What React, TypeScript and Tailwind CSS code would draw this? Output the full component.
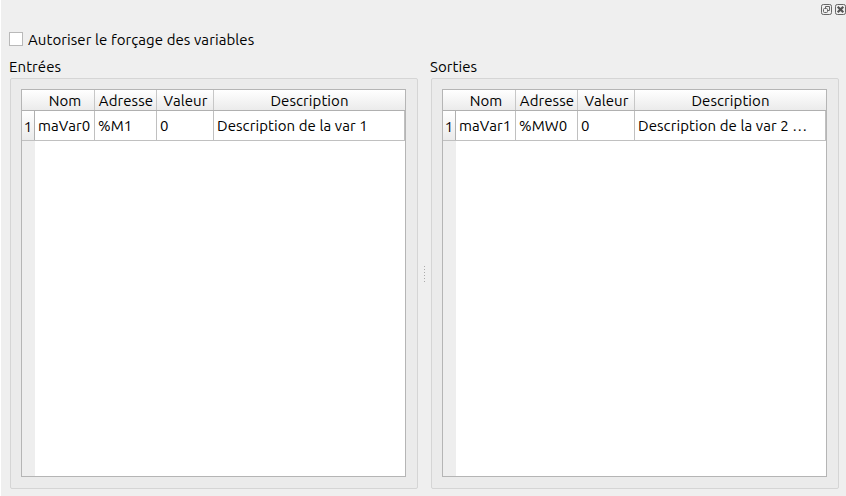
import React from "react";

type TableProps = { title: string; nom: string; adresse: string; valeur: string; description: string };

const headerCell =
  "flex h-full shrink-0 items-center justify-center border-r border-[#c7c7c7] pt-[2px] pl-px";
const bodyCell =
  "flex h-full shrink-0 items-center overflow-hidden border-r border-[#c0c0c0] pl-[3px]";

function VariableTable({ title, nom, adresse, valeur, description }: TableProps) {
  return (
    <section className="w-[409px]">
      <h2 className="h-5">{title}</h2>
      <div className="ml-px mt-px h-[411px] w-[408px] rounded-[2px] border border-[#d5d5d5] bg-[#ebebeb] p-[10px]">
        <div className="flex h-[388px] w-[385px] flex-col border border-[#b5b5b5] bg-white">
          <div className="flex h-[21px] shrink-0 border-b border-[#b0b0b0] bg-linear-to-b from-white to-[#ebebeb] pl-[13px]">
            <div className={`${headerCell} w-[60px]`}>Nom</div>
            <div className={`${headerCell} w-[62px]`}>Adresse</div>
            <div className={`${headerCell} w-[57px]`}>Valeur</div>
            <div className="flex flex-1 items-center justify-center pt-[2px]">Description</div>
          </div>
          <div className="flex h-[30px] shrink-0 border-b border-[#c0c0c0]">
            <div className="flex w-[13px] items-center justify-center border-r border-[#b0b0b0] bg-linear-to-b from-white to-[#ebebeb] pt-[2px]">1</div>
            <div className={`${bodyCell} w-[60px]`}>{nom}</div>
            <div className={`${bodyCell} w-[62px]`}>{adresse}</div>
            <div className={`${bodyCell} w-[57px]`}>{valeur}</div>
            <div className={`${bodyCell} w-[191px]`}>{description}</div>
          </div>
          <div className="w-[13px] flex-1 bg-[#eeeeee]" />
        </div>
      </div>
    </section>
  );
}

export default function App() {
  return (
    <main className="h-[496px] w-[846px] overflow-hidden border-l border-white bg-[#efefef] font-['Ubuntu','Noto_Sans',sans-serif] text-[15px] leading-5 tracking-[0.08px] whitespace-nowrap text-black">
      <div className="flex h-[30px] justify-end gap-[3px] pt-1">
        <svg width="11" height="11" viewBox="0 0 11 11" fill="none" stroke="#666">
          <rect x=".5" y=".5" width="10" height="10" rx="1.8" />
          <path d="M4.5 4.5v-2h4v4h-2" />
          <rect x="2.5" y="4.5" width="4" height="4" rx="1" />
        </svg>
        <svg width="11" height="11" viewBox="0 0 11 11" fill="none" stroke="#666">
          <rect x=".5" y=".5" width="10" height="10" rx="1.8" />
          <path d="M2.7 2.7l5.6 5.6M8.3 2.7L2.7 8.3" stroke="#555" strokeWidth="2.2" />
        </svg>
      </div>
      <label className="flex h-[27px] pl-2">
        <span className="mt-[2px] h-[14px] w-[14px] border border-[#b9b9b9] bg-white" />
        <span className="ml-[5px]">Autoriser le forçage des variables</span>
      </label>
      <div className="flex pl-2">
        <VariableTable title="Entrées" nom="maVar0" adresse="%M1" valeur="0" description="Description de la var 1" />
        <div className="flex w-3 flex-col items-center gap-[2px] pt-[209px]">
          {[0, 1, 2, 3, 4, 5].map((dot) => (
            <span key={dot} className="h-px w-px bg-[#aaa]" />
          ))}
        </div>
        <VariableTable title="Sorties" nom="maVar1" adresse="%MW0" valeur="0" description="Description de la var 2 …" />
      </div>
    </main>
  );
}
